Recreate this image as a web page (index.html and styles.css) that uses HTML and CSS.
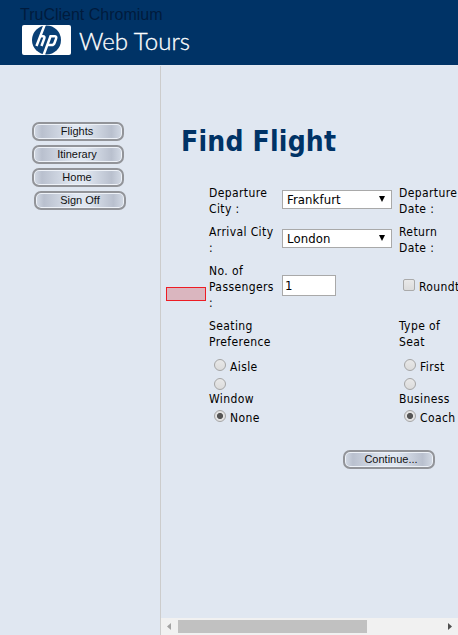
FILE: index.html
```html
<!DOCTYPE html>
<html lang="en">
<head>
<meta charset="utf-8">
<title>Web Tours</title>
<link rel="stylesheet" href="styles.css">
</head>
<body>
<header class="banner">
  <div class="product">TruClient Chromium</div>
  <div class="brand">
    <svg class="logo" width="49" height="30" viewBox="0 0 49 30">
      <rect width="49" height="30" rx="2" fill="#fff"/>
      <circle cx="24.5" cy="15" r="14.5" fill="#0a4076"/>
      <g fill="none" stroke="#fff" stroke-width="2.5">
        <path d="M23-1 14.5 21M17.8 11.3h3.2q2 0 1.2 2.3L19.5 21"/>
        <path d="M28.8 10.5 20.5 33M28 11.3h4.5q2.4 0 1.5 2.5L32.5 18q-.7 2-2.8 2H25"/>
      </g>
    </svg>
    <svg class="wordmark" width="114" height="30" viewBox="0 0 114 30">
      <text x="0" y="25" textLength="111" lengthAdjust="spacingAndGlyphs">Web Tours</text>
    </svg>
  </div>
</header>
<div class="frames">
  <nav class="sidebar">
    <button class="pill">Flights</button>
    <button class="pill">Itinerary</button>
    <button class="pill">Home</button>
    <button class="pill pill-last">Sign Off</button>
  </nav>
  <main class="content">
    <div class="page">
      <h1>Find Flight</h1>
      <div class="form">
        <div class="row">
          <div>Departure<br>City :</div>
          <div class="select">Frankfurt<svg width="6" height="6"><path d="M0 0h6L3 6z"/></svg></div>
          <div>Departure<br>Date :</div>
        </div>
        <div class="row">
          <div>Arrival City<br>:</div>
          <div class="select">London<svg width="6" height="6"><path d="M0 0h6L3 6z"/></svg></div>
          <div>Return<br>Date :</div>
        </div>
        <div class="row passengers">
          <div>No. of<br>Passengers<br>:</div>
          <div class="input">1</div>
          <div class="round"><i class="check"></i>Roundtrip ticket</div>
          <div class="highlight"></div>
        </div>
        <div class="row">
          <div>Seating<br>Preference</div><div></div><div>Type of<br>Seat</div>
        </div>
        <div class="row choices">
          <div>
            <div class="choice"><i class="radio"></i>Aisle</div>
            <div class="choice lone"><i class="radio"></i></div>
            <div class="wrapped">Window</div>
            <div class="choice"><i class="radio on"></i>None</div>
          </div>
          <div></div>
          <div>
            <div class="choice"><i class="radio"></i>First</div>
            <div class="choice lone"><i class="radio"></i></div>
            <div class="wrapped">Business</div>
            <div class="choice"><i class="radio on"></i>Coach</div>
          </div>
        </div>
      </div>
      <button class="pill continue">Continue...</button>
    </div>
    <div class="scrollbar">
      <svg width="4" height="7"><path d="M4 0v7L0 3.5z" fill="#a3a3a3"/></svg>
      <div class="thumb"></div>
      <svg width="4" height="7"><path d="M0 0v7l4-3.5z" fill="#505050"/></svg>
    </div>
  </main>
</div>
</body>
</html>
```
FILE: styles.css
```css
* { box-sizing: border-box; }
body {
  margin: 0;
  height: 635px;
  overflow: hidden;
  display: flex;
  flex-direction: column;
  background: #e0e7f1;
  color: #000;
  font: 12px/16px "DejaVu Sans Condensed", "DejaVu Sans", sans-serif;
}
.banner { height: 65px; flex: none; background: #036; padding: 5px 0 0 20px; }
.product { font: 16px/20px "Liberation Sans", sans-serif; color: #001b3d; height: 20px; }
.brand { display: flex; gap: 8px; padding-left: 2px; }
.logo { overflow: hidden; }
.wordmark text { font: 300 24px Lato, sans-serif; fill: #fff; stroke: #fff; stroke-width: .3px; }
.frames { flex: 1; display: flex; min-height: 0; border-top: 1px solid #e3e9f2; }
.sidebar {
  width: 161px;
  flex: none;
  border-right: 1px solid #ccc;
  padding: 56px 0 0 32px;
  display: flex;
  flex-direction: column;
  gap: 4px;
}
.pill {
  display: block;
  width: 92px;
  height: 19px;
  padding: 0 2px 1px 0;
  border: 2px solid #929499;
  border-radius: 7px;
  box-shadow: inset 0 0 0 1px #eef2f8;
  background: linear-gradient(90deg, #d3dae5 0, #b9c0ce 9%, #e0e7f1 45%, #e0e7f1 58%, #b9c0ce 88%, #d3dae5 100%);
  color: #111;
  font: 11px/14px "Liberation Sans", sans-serif;
  text-align: center;
}
.pill-last { margin-left: 2px; padding-right: 0; }
.content { flex: 1; min-width: 0; overflow: hidden; display: flex; flex-direction: column; }
.page { flex: 1; padding: 58px 0 0 20px; }
h1 { margin: 0; color: #036; font: bold 28px/36px "DejaVu Sans Condensed", "DejaVu Sans", sans-serif; letter-spacing: .2px; white-space: nowrap; }
.form { padding: 25px 0 0 28px; width: 360px; display: flex; flex-direction: column; gap: 7px; letter-spacing: .4px; }
.row { display: grid; grid-template-columns: 73px 117px 120px; align-items: center; white-space: nowrap; position: relative; }
.select {
  width: 110px;
  height: 19px;
  margin-bottom: 4px;
  border: 1px solid #a9a9a9;
  background: #fff;
  padding: 0 6px 0 4px;
  display: flex;
  align-items: center;
  justify-content: space-between;
  font-size: 13px;
  line-height: 17px;
  letter-spacing: .1px;
}
.input { width: 54px; height: 21px; margin-bottom: 4px; border: 1px solid #a9a9a9; background: #fff; padding-left: 2px; font-size: 13px; line-height: 19px; }
.round { display: flex; align-items: center; gap: 4px; padding-left: 4px; }
.check { width: 12px; height: 12px; margin-bottom: 4px; border: 1px solid #aaa; border-radius: 2px; background: linear-gradient(#e9e9e9, #dcdcdc); }
.highlight { position: absolute; left: -43px; top: 24px; width: 40px; height: 14px; border: 1px solid #ed1c24; background: #dab6bf; }
.choices { align-items: start; }
.choice { display: flex; align-items: center; height: 20px; gap: 4px; padding-left: 5px; }
.radio {
  width: 12px;
  height: 12px;
  margin-bottom: 4px;
  flex: none;
  border: 1px solid #a5a5a5;
  border-radius: 50%;
  background: linear-gradient(#e8e8e8, #dcdcdc);
}
.radio.on { background: radial-gradient(circle, #555 0 2.7px, #e3e3e3 3.4px); }
.lone { height: 14px; }
.lone .radio { margin-bottom: 0; }
.wrapped { height: 17px; }
.continue { margin: 22px 0 0 162px; padding-right: 0; padding-left: 4px; }
.scrollbar { height: 17px; flex: none; background: #f1f1f1; display: flex; align-items: center; padding: 0 6px; }
.thumb { width: 189px; height: 13px; margin: 0 auto 0 7px; background: #c1c1c1; }
```
